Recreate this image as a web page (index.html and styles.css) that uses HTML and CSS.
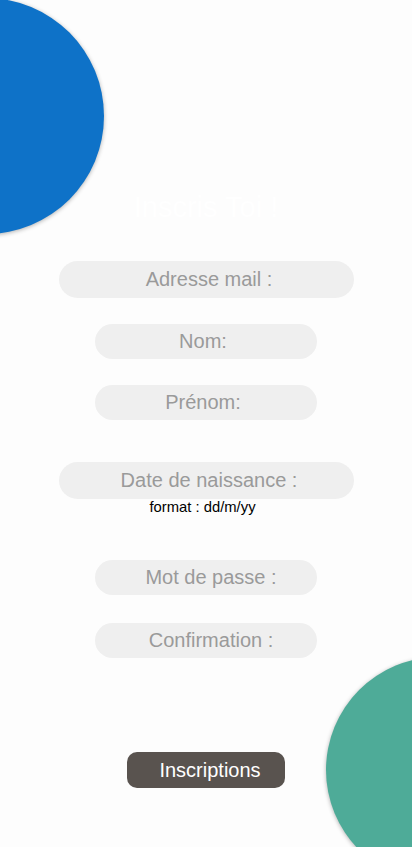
FILE: index.html
```html
<!DOCTYPE html>
<html lang="fr">
<head>
<meta charset="utf-8">
<title>Inscription</title>
<link rel="stylesheet" href="styles.css">
</head>
<body>
<div class="page">
  <div class="blob blob-blue"></div>
  <div class="blob blob-green"></div>
  <form class="form">
    <h1 class="title">Inscris Toi !</h1>
    <input class="field field-wide field-mail" type="email" placeholder="Adresse mail :">
    <input class="field field-narrow field-nom" type="text" placeholder="Nom:">
    <input class="field field-narrow field-prenom" type="text" placeholder="Prénom:">
    <input class="field field-wide field-date" type="text" placeholder="Date de naissance :">
    <p class="hint">format : dd/m/yy</p>
    <input class="field field-narrow field-pass" type="password" placeholder="Mot de passe :">
    <input class="field field-narrow field-confirm" type="password" placeholder="Confirmation :">
    <button class="submit" type="button">Inscriptions</button>
  </form>
</div>
</body>
</html>
```
FILE: styles.css
```css
html, body {
  margin: 0;
  padding: 0;
  background: #fdfdfd;
}

.page {
  position: relative;
  width: 412px;
  height: 847px;
  overflow: hidden;
  font-family: "Liberation Sans", Arial, Helvetica, sans-serif;
}

.blob {
  position: absolute;
  border-radius: 50%;
  box-shadow: 0 1px 4px rgba(0, 0, 0, 0.3);
}

.blob-blue {
  left: -132px;
  top: -2px;
  width: 236px;
  height: 236px;
  background: #0e72c8;
}

.blob-green {
  left: 326px;
  top: 657px;
  width: 226px;
  height: 226px;
  background: #4eab98;
}

.form {
  position: relative;
  display: flex;
  flex-direction: column;
  align-items: center;
  padding-top: 190px;
  margin: 0;
}

.title {
  margin: 0;
  font-size: 29px;
  line-height: 34px;
  font-weight: normal;
  color: #ffffff;
}

.field {
  box-sizing: border-box;
  display: block;
  border: none;
  outline: none;
  padding: 0 10px;
  margin: 0;
  background: #efefef;
  text-align: center;
  font-family: "Liberation Sans", Arial, Helvetica, sans-serif;
  font-size: 20px;
  color: #333;
}

.field::placeholder {
  color: #9a9a9a;
  opacity: 1;
}

.field-wide {
  width: 295px;
  height: 37px;
  border-radius: 18.5px;
  padding: 0 8px 0 14px;
}

.field-narrow {
  width: 222px;
  height: 35px;
  border-radius: 17.5px;
}

.field-mail { margin-top: 37px; }
.field-nom { margin-top: 26px; padding: 0 14px 0 8px; }
.field-prenom { margin-top: 26px; padding: 0 14px 0 8px; }
.field-date { margin-top: 42px; }
.field-pass { margin-top: 44px; padding: 0 6px 0 16px; }
.field-confirm { margin-top: 28px; padding: 0 6px 0 16px; }

.hint {
  margin: 0;
  padding-right: 7px;
  font-size: 14.8px;
  line-height: 17px;
  color: #000;
}

.submit {
  box-sizing: border-box;
  margin-top: 94px;
  width: 158px;
  height: 36px;
  padding: 0 0 0 8px;
  border: none;
  border-radius: 10px;
  background: #59534f;
  color: #ffffff;
  font-family: "Liberation Sans", Arial, Helvetica, sans-serif;
  font-size: 20px;
  line-height: 36px;
  text-align: center;
}
```
